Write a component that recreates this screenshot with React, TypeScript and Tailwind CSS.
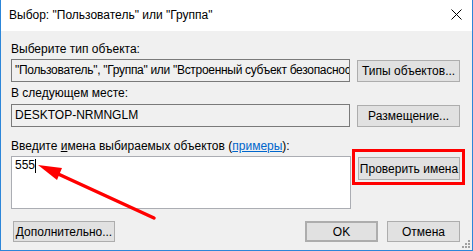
import React from 'react';

const font = { fontFamily: '"Liberation Sans", "Segoe UI", sans-serif' };

function Btn({ children, className = '' }: { children: React.ReactNode; className?: string }) {
  return (
    <div
      className={`flex items-center justify-center whitespace-nowrap bg-[#e1e1e1] border border-[#adadad] text-[12px] text-black ${className}`}
    >
      {children}
    </div>
  );
}

export default function App() {
  return (
    <div
      className="relative w-[473px] h-[251px] overflow-hidden bg-[#f0f0f0] border-x border-b border-[#2c86d9] flex flex-col"
      style={font}
    >
      {/* title bar */}
      <div className="h-[31px] shrink-0 bg-white flex items-center justify-between pl-[8px] pr-[10px]">
        <span className="text-[12px] text-black leading-none pb-[2px]">Выбор: "Пользователь" или "Группа"</span>
        <svg width="11" height="11" viewBox="0 0 11 11" className="mb-[3px]">
          <path d="M0.5 0.5 L10.5 10.5 M10.5 0.5 L0.5 10.5" stroke="#000" strokeWidth="1" />
        </svg>
      </div>

      <div className="flex flex-col pl-[10px] pr-[12px] pt-[11px] text-[12px] text-black">
        <div className="h-[15px] leading-[15px]">Выберите тип объекта:</div>
        <div className="flex gap-[7px] mt-[2px] h-[23px]">
          <div className="w-[340px] h-[23px] border border-[#7a7a7a] bg-[#f0f0f0] pl-[3px] leading-[21px] whitespace-nowrap overflow-hidden tracking-[-0.3px]">
            "Пользователь", "Группа" или "Встроенный субъект безопаснос
          </div>
          <Btn className="w-[103px] h-[22px] mt-[1px]">Типы объектов...</Btn>
        </div>

        <div className="h-[15px] leading-[15px] mt-[4px]">В следующем месте:</div>
        <div className="flex gap-[7px] mt-[3px] h-[23px]">
          <div className="w-[340px] h-[23px] border border-[#7a7a7a] bg-[#f0f0f0] pl-[3px] leading-[21px] whitespace-nowrap overflow-hidden">
            DESKTOP-NRMNGLM
          </div>
          <Btn className="w-[103px] h-[22px] mt-[1px]">Размещение...</Btn>
        </div>

        <div className="h-[15px] leading-[15px] mt-[12px]">
          Введите <span className="underline">и</span>мена выбираемых объектов (
          <span className="text-[#0066cc] underline">примеры</span>):
        </div>
        <div className="flex gap-[7px] mt-[2px]">
          <div className="w-[340px] h-[53px] border border-[#abadb3] bg-white pl-[3px] pt-[1px] leading-[15px] flex items-start">
            <span>555</span>
            <span className="inline-block w-px h-[14px] bg-black mt-[1px]" />
          </div>
          <div className="relative mt-[1px] h-[23px]">
            <Btn className="w-[102px] h-[23px]">Проверить имена</Btn>
            <div className="absolute -left-[6px] -top-[8px] -right-[5px] -bottom-[5px] border-[3px] border-[#ff0000]" />
          </div>
        </div>

        <div className="flex items-center mt-[12px]">
          <Btn className="w-[102px] h-[21px] ml-[2px]">Дополнительно...</Btn>
          <div className="flex-1" />
          <Btn className="w-[73px] h-[21px] border-2 border-[#0078d7]">OK</Btn>
          <Btn className="w-[73px] h-[21px] ml-[9px]">Отмена</Btn>
        </div>
      </div>

      {/* size grip */}
      <svg width="10" height="10" viewBox="0 0 10 10" className="absolute right-[2px] bottom-[2px]">
        {[
          [8, 2],
          [5, 5],
          [8, 5],
          [2, 8],
          [5, 8],
          [8, 8],
        ].map(([x, y], i) => (
          <rect key={i} x={x} y={y} width="2" height="2" fill="#a0a0a0" />
        ))}
      </svg>

      {/* red annotation arrow */}
      <svg className="absolute left-0 top-0 pointer-events-none" width="473" height="251" viewBox="0 0 473 251">
        <line x1="153" y1="218" x2="55" y2="173" stroke="#ff0000" strokeWidth="3.5" strokeLinecap="round" />
        <polygon points="37,165 61,168 56,180" fill="#ff0000" />
      </svg>
    </div>
  );
}
